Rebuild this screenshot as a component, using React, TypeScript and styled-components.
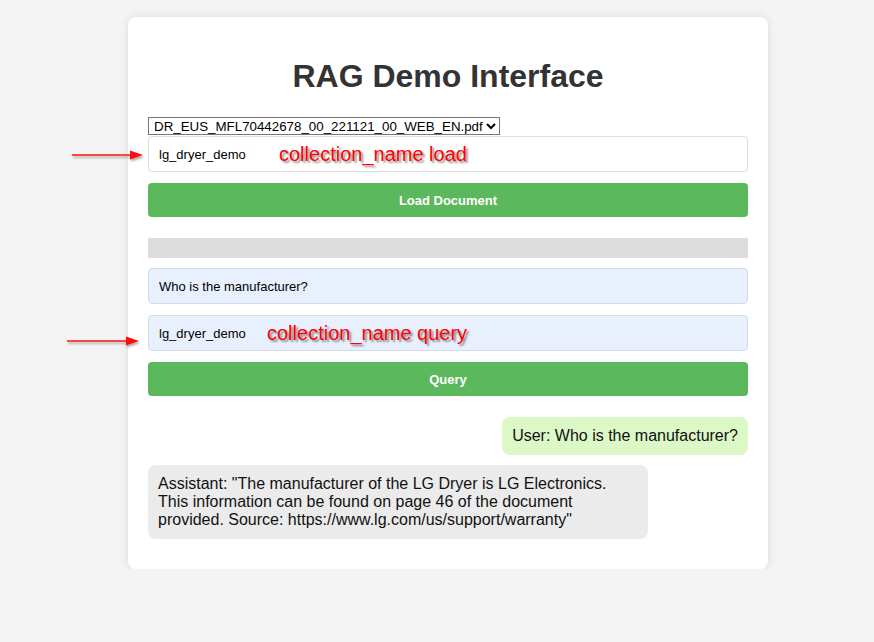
import React from "react";
import styled, { createGlobalStyle } from "styled-components";

const GlobalStyle = createGlobalStyle`
  html, body {
    margin: 0;
    padding: 0;
    background: #f4f4f4;
    font-family: "Liberation Sans", Arial, sans-serif;
  }
`;

const Arrow = ({ width }: { width: number }) => (
  <svg width={width + 6} height="14" viewBox={`0 0 ${width + 6} 14`}>
    <defs>
      <filter id="arrowShadow" x="-10%" y="-50%" width="120%" height="250%">
        <feDropShadow dx="1" dy="2" stdDeviation="1" floodColor="#000" floodOpacity="0.35" />
      </filter>
    </defs>
    <g filter="url(#arrowShadow)">
      <line x1="0" y1="6" x2={width - 10} y2="6" stroke="#ff1010" strokeWidth="1.6" />
      <polygon points={`${width - 13},1.5 ${width},6 ${width - 13},10.5`} fill="#ff1010" />
    </g>
  </svg>
);

const App = () => {
  return (
    <>
      <GlobalStyle />
      <Card>
        <Title>RAG Demo Interface</Title>
        <FileSelect defaultValue="DR_EUS_MFL70442678_00_221121_00_WEB_EN.pdf">
          <option>DR_EUS_MFL70442678_00_221121_00_WEB_EN.pdf</option>
        </FileSelect>
        <Field>
          <TextInput defaultValue="lg_dryer_demo" />
          <ArrowMark $left={-76} $top={13}>
            <Arrow width={71} />
          </ArrowMark>
          <Note $left={131}>collection_name load</Note>
        </Field>
        <Button>Load Document</Button>
        <Progress />
        <Field>
          <TextInput $filled defaultValue="Who is the manufacturer?" />
        </Field>
        <Field>
          <TextInput $filled defaultValue="lg_dryer_demo" />
          <ArrowMark $left={-81} $top={20}>
            <Arrow width={72} />
          </ArrowMark>
          <Note $left={119}>collection_name query</Note>
        </Field>
        <Button>Query</Button>
        <Chat>
          <Bubble $user>User: Who is the manufacturer?</Bubble>
          <Bubble>
            Assistant: "The manufacturer of the LG Dryer is LG Electronics. This
            information can be found on page 46 of the document provided. Source:
            https://www.lg.com/us/support/warranty"
          </Bubble>
        </Chat>
      </Card>
    </>
  );
};

export default App;

const Card = styled.div`
  width: 600px;
  margin: 17px 0 0 128px;
  padding: 20px 20px 30px;
  background: #fff;
  border-radius: 8px;
  box-shadow: 0 0 10px rgba(0, 0, 0, 0.1);
`;

const Title = styled.h1`
  margin: 21px 0 22px;
  font-size: 32px;
  font-weight: bold;
  text-align: center;
  color: #333;
  line-height: 37px;
`;

const FileSelect = styled.select`
  display: block;
  height: 18px;
  margin: 0 0 1px;
  padding: 0 0 0 1px;
  font-family: "Liberation Sans", Arial, sans-serif;
  font-size: 13.33px;
  color: #000;
  background: #fff;
  border: 1px solid #767676;
  border-radius: 0;
`;

const Field = styled.div`
  position: relative;
  margin-bottom: 11px;
`;

const TextInput = styled.input<{ $filled?: boolean }>`
  display: block;
  box-sizing: border-box;
  width: 100%;
  height: 36px;
  padding: 10px;
  font-family: "Liberation Sans", Arial, sans-serif;
  font-size: 13px;
  color: #000;
  background: ${({ $filled }) => ($filled ? "#e8f0fe" : "#fff")};
  border: 1px solid ${({ $filled }) => ($filled ? "#d6dbe4" : "#ddd")};
  border-radius: 4px;
  outline: none;
`;

const ArrowMark = styled.div<{ $left: number; $top: number }>`
  position: absolute;
  left: ${({ $left }) => $left}px;
  top: ${({ $top }) => $top}px;
  line-height: 0;
`;

const Note = styled.span<{ $left: number }>`
  position: absolute;
  left: ${({ $left }) => $left}px;
  top: 7px;
  font-family: "Liberation Sans", Arial, sans-serif;
  font-size: 20px;
  line-height: 23px;
  color: #ff0000;
  text-shadow: 2px 2px 2px rgba(0, 0, 0, 0.45);
  pointer-events: none;
`;

const Button = styled.button`
  display: block;
  width: 100%;
  height: 34px;
  padding: 0;
  font-family: "Liberation Sans", Arial, sans-serif;
  font-size: 13px;
  font-weight: bold;
  color: #fff;
  background: #5cb85c;
  border: none;
  border-radius: 4px;
  cursor: pointer;
`;

const Progress = styled.div`
  height: 20px;
  margin: 21px 0 10px;
  background: #dcdcdc;
`;

const Chat = styled.div`
  display: flex;
  flex-direction: column;
  gap: 10px;
  margin-top: 21px;
`;

const Bubble = styled.div<{ $user?: boolean }>`
  align-self: ${({ $user }) => ($user ? "flex-end" : "flex-start")};
  max-width: 480px;
  padding: 10px;
  font-size: 16px;
  line-height: 18px;
  color: #111;
  background: ${({ $user }) => ($user ? "#dcf8c6" : "#ebebeb")};
  border-radius: 8px;
`;
